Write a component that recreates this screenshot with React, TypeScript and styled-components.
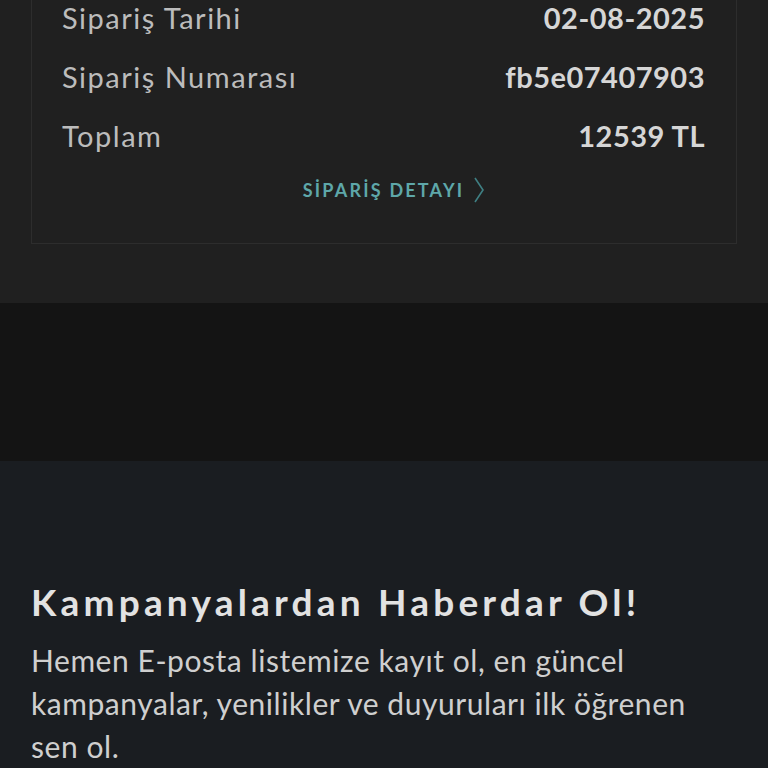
import React from 'react';
import styled, { createGlobalStyle } from 'styled-components';

const GlobalStyle = createGlobalStyle`
  html, body {
    margin: 0;
    padding: 0;
    background: #1a1d21;
    overflow: hidden;
  }
  body {
    font-family: Lato, 'Noto Sans', sans-serif;
  }
`;

const Page = styled.div`
  width: 768px;
  height: 768px;
  overflow: hidden;
  display: flex;
  flex-direction: column;
`;

const OrderSection = styled.section`
  background: #202020;
  padding: 0 31px 59px;
`;

const OrderCard = styled.div`
  margin-top: -12px;
  border: 1px solid #2d2d2d;
  border-top: none;
  padding: 0 31px 43px 30px;
  display: flex;
  flex-direction: column;
`;

const Row = styled.div`
  height: 59px;
  display: flex;
  align-items: center;
  justify-content: space-between;
`;

const Label = styled.span`
  font-size: 29px;
  font-weight: 400;
  color: #bcbcbc;
  letter-spacing: 1.5px;
`;

const Value = styled.span`
  font-size: 29px;
  font-weight: 700;
  color: #d6d6d6;
  letter-spacing: 0.5px;
`;

const DetailLink = styled.a`
  margin-top: 15px;
  align-self: center;
  display: flex;
  align-items: center;
  gap: 9px;
  height: 20px;
  padding-left: 21px;
  font-size: 18px;
  font-weight: 700;
  letter-spacing: 2.2px;
  color: #5ea7a9;
  text-decoration: none;
`;

const Spacer = styled.div`
  height: 160px;
  background: #141414;
`;

const Newsletter = styled.section`
  flex: 1;
  background: #1a1d21;
  padding: 119px 31px 0;
`;

const Heading = styled.h2`
  margin: 0;
  font-size: 37px;
  line-height: 44px;
  font-weight: 700;
  letter-spacing: 4.2px;
  color: #e2e2e2;
`;

const Text = styled.p`
  margin: 15px 0 0;
  font-size: 30px;
  line-height: 43px;
  letter-spacing: 0.55px;
  color: #cfcfcf;
`;

const Chevron = () => (
  <svg width="12" height="26" viewBox="0 0 12 26" fill="none">
    <path d="M2 1 L10 13 L2 25" stroke="#3f7f83" strokeWidth="1.6" />
  </svg>
);

const rows = [
  { label: 'Sipariş Tarihi', value: '02-08-2025' },
  { label: 'Sipariş Numarası', value: 'fb5e07407903' },
  { label: 'Toplam', value: '12539 TL' },
];

export default function App() {
  return (
    <Page>
      <GlobalStyle />
      <OrderSection>
        <OrderCard>
          {rows.map((r) => (
            <Row key={r.label}>
              <Label>{r.label}</Label>
              <Value>{r.value}</Value>
            </Row>
          ))}
          <DetailLink href="#">
            SİPARİŞ DETAYI
            <Chevron />
          </DetailLink>
        </OrderCard>
      </OrderSection>
      <Spacer />
      <Newsletter>
        <Heading>Kampanyalardan Haberdar Ol!</Heading>
        <Text>
          Hemen E-posta listemize kayıt ol, en güncel kampanyalar, yenilikler ve duyuruları ilk öğrenen sen ol.
        </Text>
      </Newsletter>
    </Page>
  );
}
